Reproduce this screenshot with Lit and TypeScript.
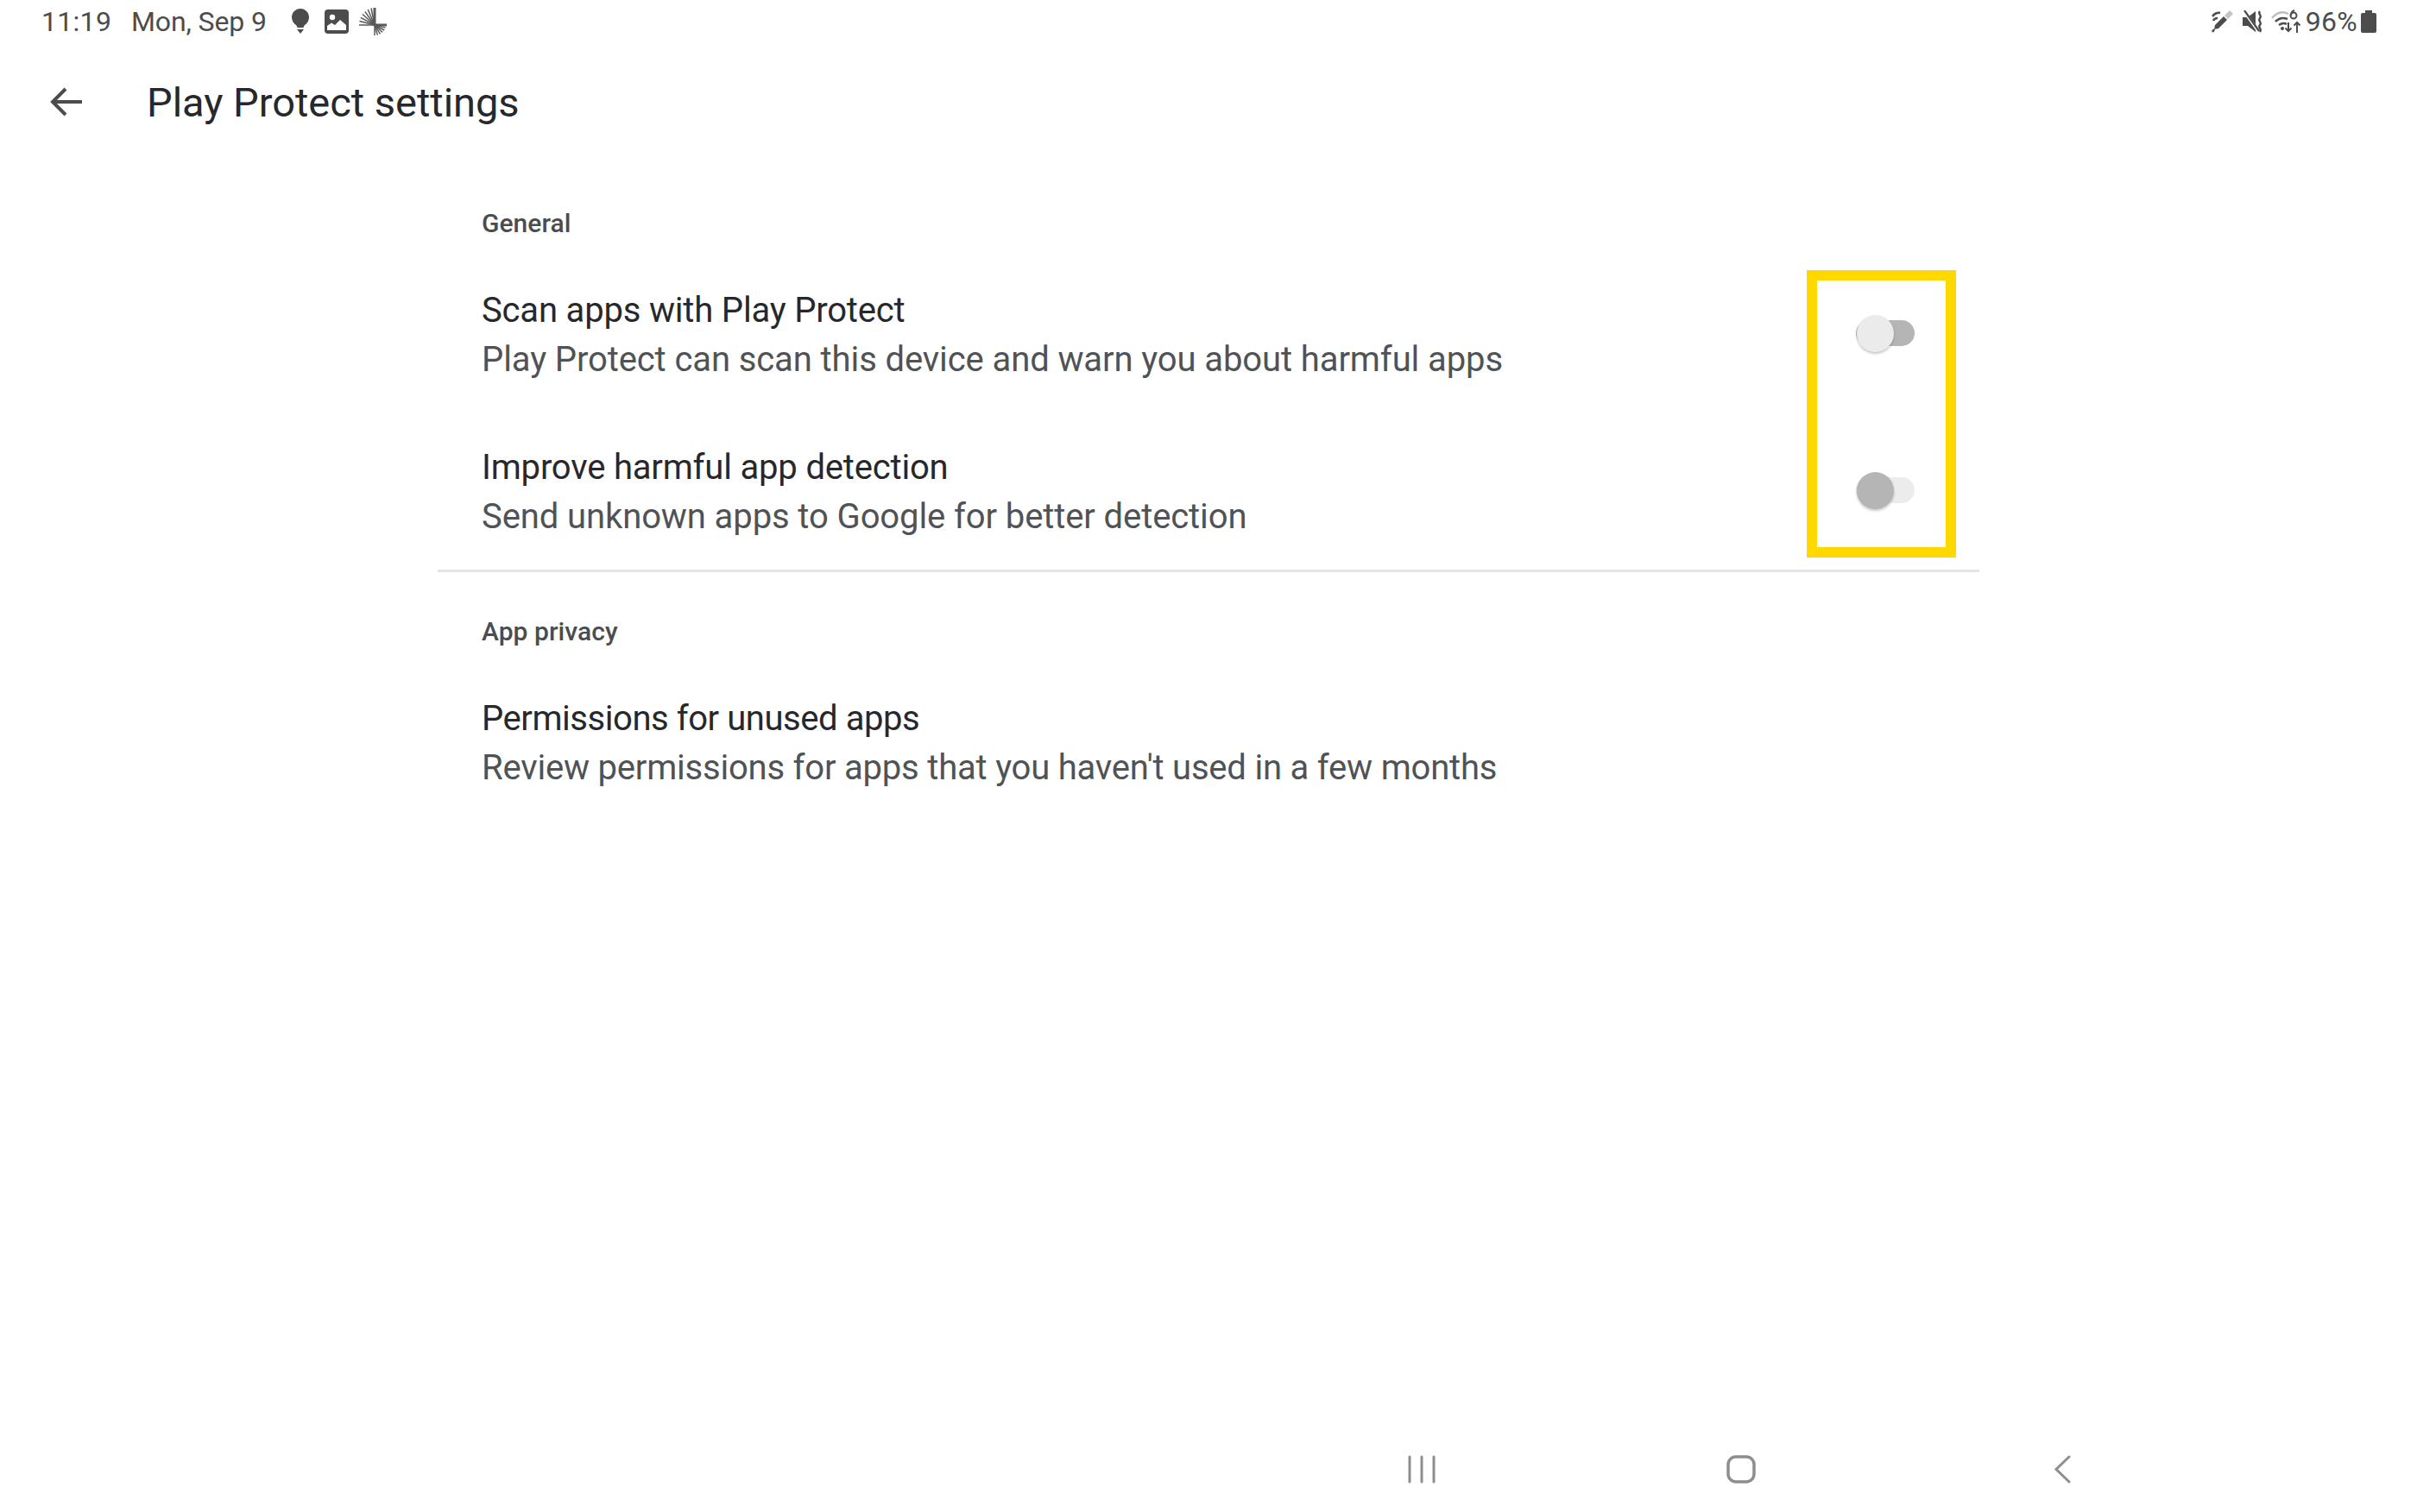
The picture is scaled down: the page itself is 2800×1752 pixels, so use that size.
import { LitElement, html, css, svg } from "lit";
import { customElement } from "lit/decorators.js";

const rays = Array.from({ length: 8 }, (_, i) => {
  const a = (Math.PI / 2) * (i / 7);
  return svg`<line x1="19" y1="22" x2="${19 - 18 * Math.sin(a)}" y2="${22 - 20 * Math.cos(a)}"/>`;
});
const rays2 = Array.from({ length: 7 }, (_, i) => {
  const a = (Math.PI / 2) * (i / 6);
  return svg`<line x1="19" y1="22" x2="${19 + 13 * Math.cos(a)}" y2="${22 + 12 * Math.sin(a)}"/>`;
});

@customElement("app-root")
export class AppRoot extends LitElement {
  static styles = css`
    :host {
      display: flex;
      flex-direction: column;
      position: relative;
      width: 2800px;
      height: 1752px;
      background: #fff;
      font-family: Roboto, "Liberation Sans", sans-serif;
      overflow: hidden;
    }
    .status {
      height: 50px;
      display: flex;
      align-items: center;
      padding: 0 47px 0 48px;
      color: #4c4c4c;
      font-size: 32px;
      box-sizing: border-box;
    }
    .time { width: 104px; letter-spacing: 0.3px; }
    .date { width: 186px; letter-spacing: -0.1px; }
    .icons { display: flex; align-items: center; }
    .spacer { flex: 1; }
    .pct { margin: 0 4px 0 6px; letter-spacing: 0.3px; }
    svg { display: block; flex: none; }
    .bulb { margin-left: 0; }
    .pic { margin-left: 18px; }
    .hand { margin-left: 11px; }
    .mute { margin-left: 10px; }
    .wifi { margin-left: 8px; }
    .bar {
      height: 136px;
      display: flex;
      align-items: center;
      padding-left: 58px;
      box-sizing: border-box;
    }
    .title {
      margin-left: 74px;
      font-size: 47px;
      color: #26282b;
      letter-spacing: -0.02px;
    }
    .list {
      width: 1786px;
      margin: 0 auto;
    }
    .section { padding: 51px 0 33px; }
    .section + .section { padding-top: 47px; border-top: 3px solid #e4e4e4; }
    .head {
      padding-left: 51px;
      height: 44px;
      line-height: 44px;
      font-size: 30px;
      font-weight: 500;
      color: #4a4d50;
      letter-spacing: 0.05px;
    }
    .rows {
      display: flex;
      flex-direction: column;
      gap: 68px;
      margin-top: 50px;
    }
    .row {
      display: flex;
      align-items: flex-start;
      justify-content: space-between;
      padding-left: 51px;
    }
    .t { font-size: 40px; line-height: 57px; color: #26282b; letter-spacing: -0.18px; }
    .s { font-size: 40px; line-height: 57px; color: #505356; letter-spacing: -0.1px; }
    .tight .t { letter-spacing: -0.44px; }
    .tight .s { letter-spacing: -0.2px; }
    .sw {
      position: relative;
      width: 68px;
      height: 30px;
      margin: 40px 75px 0 0;
      border-radius: 15px;
    }
    .sw.a { background: #b5b5b5; }
    .sw.b { background: #ececec; }
    .thumb {
      position: absolute;
      left: 1px;
      top: -6px;
      width: 43px;
      height: 43px;
      border-radius: 50%;
      box-shadow: 0 2px 3px rgba(0, 0, 0, 0.22);
    }
    .a .thumb { background: #ebebeb; }
    .b .thumb { background: #b5b5b5; }
    .mark {
      position: absolute;
      left: 2093px;
      top: 313px;
      width: 173px;
      height: 333px;
      box-sizing: border-box;
      border: 12px solid #ffd800;
    }
    .nav {
      margin-top: auto;
      height: 114px;
      display: flex;
      align-items: flex-start;
      padding: 48px 0 0 1631px;
      box-sizing: border-box;
    }
    .home { margin-left: 337px; }
    .back { margin-left: 345px; }
  `;

  private row(t: string, s: string, sw?: string, tight = false) {
    return html`<div class="row ${tight ? "tight" : ""}">
      <div>
        <div class="t">${t}</div>
        <div class="s">${s}</div>
      </div>
      ${sw ? html`<div class="sw ${sw}"><div class="thumb"></div></div>` : ""}
    </div>`;
  }

  render() {
    return html`
      <div class="status">
        <span class="time">11:19</span>
        <span class="date">Mon, Sep 9</span>
        <div class="icons">
          <svg class="bulb" width="20" height="30" viewBox="0 0 20 30" fill="#4c4c4c">
            <path d="M10 0C4.5 0 0 4.4 0 9.9c0 4 2.2 7.2 5.5 9.6L6.5 22h7l1-2.5C17.800 17.100 20 13.900 20 9.900 20 4.400 15.500 0 10 0zM6 24h8l-4 5z"/>
          </svg>
          <svg class="pic" width="28" height="28" viewBox="0 0 28 28">
            <rect width="28" height="28" rx="4" fill="#4c4c4c"/>
            <circle cx="9" cy="9" r="3.200" fill="#fff"/>
            <path d="M3 24v-5l5-3.500 4 2.500 6-6 7 6v6z" fill="#fff"/>
          </svg>
          <svg class="hand" width="34" height="36" viewBox="0 0 34 36" stroke="#5a5a5a" stroke-width="1.500" fill="none">
            ${rays}${rays2}
            <line x1="19" y1="22" x2="33" y2="22" stroke-width="3"/>
            <line x1="19" y1="2" x2="19" y2="22" stroke-width="3"/>
          </svg>
        </div>
        <span class="spacer"></span>
        <div class="icons">
          <svg width="26" height="26" viewBox="0 0 26 26">
            <path d="M25 4 21 0 15 6 19 10z" fill="#c4c4c4"/>
            <path d="M14 7 18 11 8 21 3 22 4 17z" fill="#4c4c4c"/>
            <path d="M3 22 1 25" stroke="#4c4c4c" stroke-width="2.500" fill="none"/>
            <path d="M1 7c2-3 6-5 9-4M2 12c1-2 3-3 5-3" stroke="#4c4c4c" stroke-width="2.600" fill="none"/>
          </svg>
          <svg class="mute" width="25" height="26" viewBox="0 0 25 26">
            <path d="M0 8h6l9-7v24l-9-7H0z" fill="#4c4c4c"/>
            <path d="M1 0l17 24" stroke="#fff" stroke-width="3.500"/>
            <path d="M2 0l17 24" stroke="#4c4c4c" stroke-width="2.200"/>
            <path d="M20 1c-3 3 3 5 0 8s3 5 0 8 3 4 0 8" stroke="#4c4c4c" stroke-width="2.400" fill="none"/>
          </svg>
          <svg class="wifi" width="34" height="28" viewBox="0 0 34 28" fill="none">
            <path d="M1 10C7 3 14 2 20 5" stroke="#bdbdbd" stroke-width="2.500"/>
            <path d="M5 14c4-4 9-5 14-3M9 18c3-2 6-3 9-1" stroke="#4c4c4c" stroke-width="2.500"/>
            <circle cx="13" cy="22" r="2" fill="#4c4c4c"/>
            <circle cx="26" cy="7" r="3.500" stroke="#4c4c4c" stroke-width="2"/>
            <path d="M27 1c-3 1-4 3-4 6" stroke="#4c4c4c" stroke-width="2"/>
            <path d="M20 15v10m-3.500-3.500L20 25l3.500-3.500M30 27V15m-3.500 3.500L30 15l3.500 3.500" stroke="#4c4c4c" stroke-width="2"/>
          </svg>
          <span class="pct">96%</span>
          <svg width="18" height="26" viewBox="0 0 18 26">
            <path d="M5 0h8v3h3a2 2 0 0 1 2 2v19a2 2 0 0 1-2 2H2a2 2 0 0 1-2-2V5a2 2 0 0 1 2-2h3z" fill="#4c4c4c"/>
          </svg>
        </div>
      </div>
      <div class="bar">
        <svg width="38" height="34" viewBox="0 0 38 34" fill="none" stroke="#4c4c4c" stroke-width="4">
          <path d="M37 17H3M18 2 3 17l15 15"/>
        </svg>
        <div class="title">Play Protect settings</div>
      </div>
      <div class="list">
        <div class="section">
          <div class="head">General</div>
          <div class="rows">
            ${this.row("Scan apps with Play Protect", "Play Protect can scan this device and warn you about harmful apps", "a")}
            ${this.row("Improve harmful app detection", "Send unknown apps to Google for better detection", "b")}
          </div>
        </div>
        <div class="section">
          <div class="head">App privacy</div>
          <div class="rows">
            ${this.row("Permissions for unused apps", "Review permissions for apps that you haven't used in a few months", undefined, true)}
          </div>
        </div>
      </div>
      <div class="mark"></div>
      <div class="nav">
        <svg width="32" height="33" viewBox="0 0 32 33" stroke="#8e8e8e" stroke-width="3" stroke-linecap="round">
          <path d="M2 2v29M16 2v29M30 2v29"/>
        </svg>
        <svg class="home" width="34" height="33" viewBox="0 0 34 33" fill="none" stroke="#8e8e8e" stroke-width="3.500">
          <rect x="2" y="2" width="30" height="29" rx="9"/>
        </svg>
        <svg class="back" width="20" height="33" viewBox="0 0 20 33" fill="none" stroke="#8e8e8e" stroke-width="3" stroke-linecap="round">
          <path d="M18 2 3 16.500 18 31"/>
        </svg>
      </div>
    `;
  }
}
